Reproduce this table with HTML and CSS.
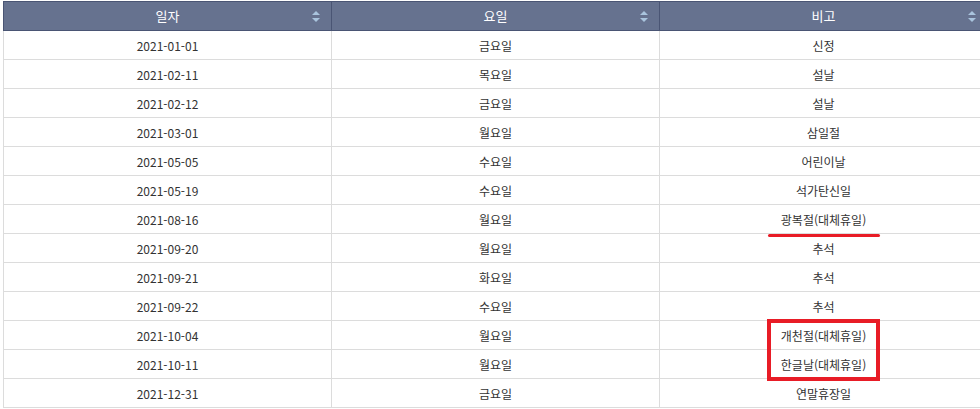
FILE: index.html
```html
<!DOCTYPE html>
<html lang="ko">
<head>
<meta charset="utf-8">
<link rel="stylesheet" href="styles.css">
</head>
<body>
<div class="wrap">
  <table class="grid">
    <colgroup><col class="c"><col class="c"><col class="c"></colgroup>
    <thead>
      <tr>
        <th><span class="label">일자</span><span class="sort"></span></th>
        <th><span class="label">요일</span><span class="sort"></span></th>
        <th><span class="label">비고</span><span class="sort"></span></th>
      </tr>
    </thead>
    <tbody>
      <tr><td>2021-01-01</td><td>금요일</td><td>신정</td></tr>
      <tr><td>2021-02-11</td><td>목요일</td><td>설날</td></tr>
      <tr><td>2021-02-12</td><td>금요일</td><td>설날</td></tr>
      <tr><td>2021-03-01</td><td>월요일</td><td>삼일절</td></tr>
      <tr><td>2021-05-05</td><td>수요일</td><td>어린이날</td></tr>
      <tr><td>2021-05-19</td><td>수요일</td><td>석가탄신일</td></tr>
      <tr><td>2021-08-16</td><td>월요일</td><td>광복절(대체휴일)</td></tr>
      <tr><td>2021-09-20</td><td>월요일</td><td>추석</td></tr>
      <tr><td>2021-09-21</td><td>화요일</td><td>추석</td></tr>
      <tr><td>2021-09-22</td><td>수요일</td><td>추석</td></tr>
      <tr><td>2021-10-04</td><td>월요일</td><td>개천절(대체휴일)</td></tr>
      <tr><td>2021-10-11</td><td>월요일</td><td>한글날(대체휴일)</td></tr>
      <tr><td>2021-12-31</td><td>금요일</td><td>연말휴장일</td></tr>
    </tbody>
  </table>
  <div class="mark-underline"></div>
  <div class="mark-box"></div>
</div>
</body>
</html>
```
FILE: styles.css
```css
html, body {
  margin: 0;
  padding: 0;
  background: #ffffff;
  overflow: hidden;
}
.wrap {
  position: relative;
  padding: 1px 0 0 3px;
  width: 990px;
}
.grid {
  border-collapse: collapse;
  table-layout: fixed;
  width: 985px;
  font-family: "Noto Sans CJK KR", "Liberation Sans", sans-serif;
}
.grid .c { width: 328px; }
.grid th {
  position: relative;
  height: 28px;
  padding: 0;
  background: #66728f;
  border: 1px solid #4a5574;
  color: #ffffff;
  font-size: 13px;
  font-weight: normal;
  text-align: center;
  line-height: 28px;
}
.sort {
  position: absolute;
  right: 11px;
  top: 9px;
  width: 8px;
  height: 11px;
}
.sort::before, .sort::after {
  content: "";
  position: absolute;
  left: 0;
  border-left: 4px solid transparent;
  border-right: 4px solid transparent;
}
.sort::before {
  top: 0;
  border-bottom: 4px solid #a9c4de;
}
.sort::after {
  bottom: 0;
  border-top: 4px solid #a9c4de;
}
.grid td {
  height: 26px;
  padding: 2px 0 0;
  border: 1px solid #dcdcdc;
  color: #333333;
  font-size: 12px;
  text-align: center;
  line-height: 26px;
}
.mark-underline {
  position: absolute;
  left: 768px;
  top: 234px;
  width: 112px;
  height: 3px;
  border-radius: 2px;
  background: #e81c26;
}
.mark-box {
  position: absolute;
  left: 767px;
  top: 319px;
  width: 105px;
  height: 54px;
  border: 4px solid #e81c26;
}
```
